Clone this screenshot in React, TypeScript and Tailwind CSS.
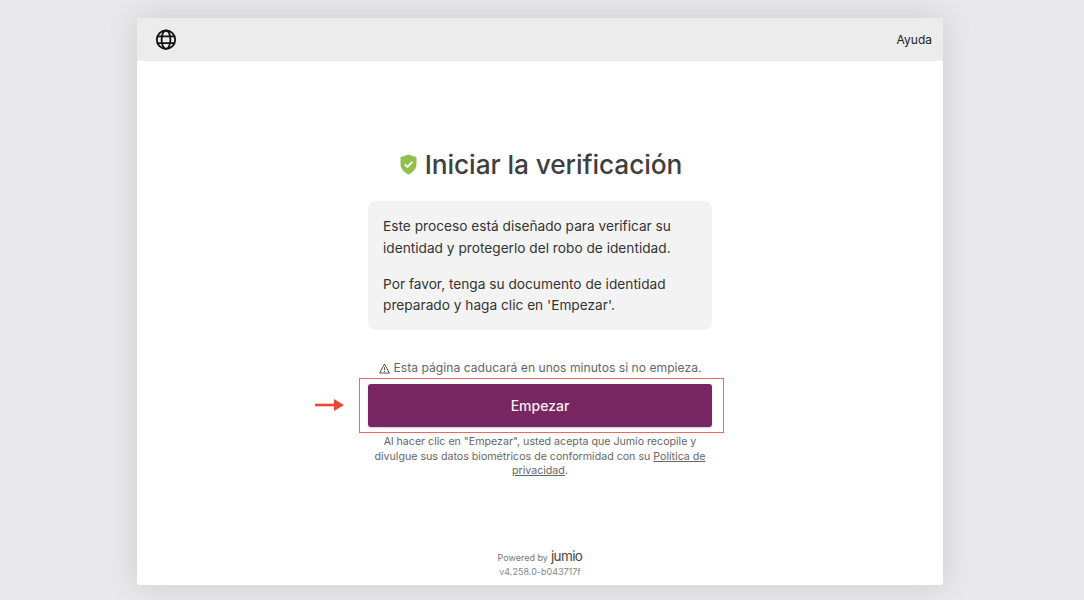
import React from "react";

const font = { fontFamily: "Inter, 'Liberation Sans', sans-serif" };

export default function App() {
  return (
    <div className="h-[600px] w-[1084px] overflow-hidden bg-[#e9e9eb] pl-[137px] pt-[18px] font-['Inter',sans-serif]" style={font}>
      <div className="flex h-[567px] w-[806px] flex-col rounded-[3px] bg-white shadow-[0_0_32px_rgba(0,0,0,0.13)]">
        <header className="flex h-[43px] shrink-0 items-center justify-between rounded-t-[3px] bg-[#ececec] pl-[18px] pr-[11px]">
          <svg width="22" height="22" viewBox="0 0 22 22" fill="none" stroke="#111" strokeWidth="1.8">
            <circle cx="11" cy="10.7" r="9.2" />
            <ellipse cx="11" cy="10.7" rx="4.4" ry="9.2" />
            <path d="M2.6 7.3h16.8M2.6 14.1h16.8" />
          </svg>
          <span className="text-[12px] leading-none text-[#222]">Ayuda</span>
        </header>

        <main className="flex flex-1 flex-col items-center">
          <div className="ml-[2px] mt-[87px] flex h-[34px] items-center gap-[8px]">
            <svg width="17" height="21" viewBox="0 0 17 21" className="mt-[-2px]">
              <path d="M8.5 0.5 L16.5 3.2 V9.5 C16.5 14.8 13 18.6 8.5 20.5 C4 18.6 0.5 14.8 0.5 9.5 V3.2 Z" fill="#93c04b" />
              <path d="M4.8 10.3 L7.5 13 L12.4 7.8" fill="none" stroke="#fff" strokeWidth="1.9" />
            </svg>
            <h1 className="text-[26.3px] font-medium leading-[34px] tracking-[-0.1px] text-[#3f3f3f]">Iniciar la verificación</h1>
          </div>

          <div className="mt-[19px] h-[129px] w-[344px] rounded-[7px] bg-[#f3f3f3] px-[15px] pt-[15px] text-[13.7px] leading-[21.5px] text-[#333]">
            <p>Este proceso está diseñado para verificar su identidad y protegerlo del robo de identidad.</p>
            <p className="mt-[14.5px]">Por favor, tenga su documento de identidad preparado y haga clic en 'Empezar'.</p>
          </div>

          <p className="mt-[30px] flex h-[16px] items-center gap-[4px] text-[12.15px] leading-[16px] text-[#666]">
            <svg width="11" height="11" viewBox="0 0 11 11" fill="none" stroke="#444" strokeWidth="0.9">
              <path d="M5.5 1 L10.4 10 H0.6 Z" />
              <path d="M5.5 4.2v3M5.5 8v1" />
            </svg>
            Esta página caducará en unos minutos si no empieza.
          </p>

          <div className="relative mt-[8px]">
            <button className="block h-[43px] w-[344px] rounded-[3px] bg-[#772662] text-[14px] font-medium text-[#f5eef3] shadow-[0_1px_2px_rgba(0,0,0,0.2)]">
              Empezar
            </button>
            <div className="absolute -left-[9px] -top-[6px] h-[55px] w-[365px] border border-[#ea6a62]" />
            <svg className="absolute -left-[53px] top-[14px]" width="29" height="14" viewBox="0 0 29 14">
              <path d="M0 7 H22" stroke="#e8473c" strokeWidth="2.6" />
              <path d="M19 1 L29 7 L19 13 Z" fill="#e8473c" />
            </svg>
          </div>

          <p className="mt-[8px] w-[344px] text-center text-[10.65px] leading-[14.5px] text-[#666]">
            Al hacer clic en "Empezar", usted acepta que Jumio recopile y divulgue sus datos biométricos de conformidad con su <span className="underline">Política de privacidad</span>.
          </p>

          <div className="mt-auto mb-[4px] flex h-[32px] flex-col items-center">
            <div className="flex h-[16px] items-center gap-[3px] text-[9px] leading-none text-[#777]">
              Powered by <span className="text-[13.5px] font-normal tracking-[-0.6px] text-[#444]">jumio</span>
            </div>
            <div className="mt-[1px] text-[9px] leading-[12px] text-[#888]">v4.258.0-b043717f</div>
          </div>
        </main>
      </div>
    </div>
  );
}
